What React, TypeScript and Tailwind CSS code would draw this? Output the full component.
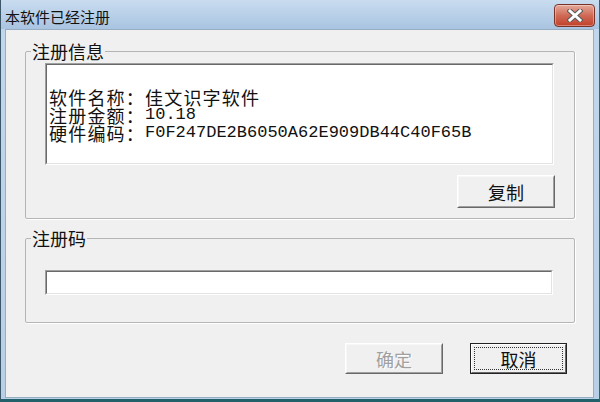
const cjk = "font-['Noto_Sans_CJK_SC','Noto_Sans',sans-serif]";

const Raised = ({ children, w, h, disabled }: { children: string; w: string; h: string; disabled?: boolean }) => (
  <div className={`${w} ${h} border border-t-white border-l-white border-r-[#696969] border-b-[#696969] bg-[#f0f0f0]`}>
    <div className="w-full h-full border border-t-[#f7f7f7] border-l-[#f7f7f7] border-r-[#a0a0a0] border-b-[#a0a0a0] flex items-center justify-center">
      <span
        className={`text-[18px] leading-[18px] ${disabled ? 'text-[#a0a0a0] [text-shadow:1px_1px_0_#ffffff]' : 'text-[#111]'}`}
      >
        {children}
      </span>
    </div>
  </div>
);

const CloseButton = () => (
  <div className="w-[41px] h-[23px] rounded-[4px] border border-[#7a3328] bg-gradient-to-b from-[#e5a99b] via-[#cf6a56] to-[#c23e27] flex items-center justify-center shadow-[inset_0_0_0_1px_rgba(255,255,255,0.35)]">
    <svg width="16" height="13" viewBox="0 0 16 13">
      <path d="M3 2 L13 11 M13 2 L3 11" stroke="#5a5a5a" strokeWidth="5" strokeLinecap="square" />
      <path d="M3 2 L13 11 M13 2 L3 11" stroke="#ffffff" strokeWidth="3" strokeLinecap="square" />
    </svg>
  </div>
);

const Line = ({ label, value, mono }: { label: string; value: string; mono?: boolean }) => (
  <div className="h-[18px] flex items-center whitespace-nowrap">
    <span className="text-[18px] leading-[18px] tracking-[1.2px]">{label}</span>
    {mono ? (
      <span className="font-['Liberation_Mono',monospace] text-[17px] leading-[18px]">{value}</span>
    ) : (
      <span className="text-[18px] leading-[18px] tracking-[1.2px]">{value}</span>
    )}
  </div>
);

export default function App() {
  return (
    <div
      className={`w-[600px] h-[402px] flex flex-col overflow-hidden bg-gradient-to-b from-[#c3d7ec] to-[#b9cfe6] border-l border-l-[#3d576a] border-r border-r-[#2e6672] border-b-[3px] border-b-[#22606a] text-[#111] ${cjk}`}
    >
      <div className="h-[29px] shrink-0 flex items-start justify-between pl-[4px] pr-[4px] bg-gradient-to-b from-[#c9dcf0] to-[#a9c4e1]">
        <span className="text-[15px] leading-[15px] mt-[9px]">本软件已经注册</span>
        <div className="mt-[4px]">
          <CloseButton />
        </div>
      </div>

      <div className="flex-1 ml-[4px] mr-[5px] mb-[1px] bg-[#f0f0f0] border border-[#97adc2] flex flex-col pl-[19px] pr-[18px] pt-[12px]">
        <fieldset className="border border-[#b5b5b5] rounded-[2px] shadow-[1px_1px_0_#ffffff]">
          <legend className="ml-[5px] px-[1px] text-[18px] leading-[18px]">注册信息</legend>
          <div className="ml-[19px] mt-[3px] w-[509px] h-[102px] border border-t-[#a0a0a0] border-l-[#a0a0a0] border-r-white border-b-white">
            <div className="w-full h-full bg-white border border-t-[#696969] border-l-[#696969] border-r-[#e3e3e3] border-b-[#e3e3e3] pl-[2px] pt-[23px]">
              <Line label="软件名称：" value="佳文识字软件" />
              <Line label="注册金额：" value="10.18" mono />
              <Line label="硬件编码：" value="F0F247DE2B6050A62E909DB44C40F65B" mono />
            </div>
          </div>
          <div className="flex justify-end mt-[10px] mr-[19px] pb-[10px]">
            <Raised w="w-[98px]" h="h-[33px]">复制</Raised>
          </div>
        </fieldset>

        <fieldset className="mt-[10px] border border-[#b5b5b5] rounded-[2px] shadow-[1px_1px_0_#ffffff]">
          <legend className="ml-[5px] px-[1px] text-[18px] leading-[18px]">注册码</legend>
          <div className="ml-[19px] mt-[23px] mb-[27px] w-[508px] h-[25px] border border-t-[#a0a0a0] border-l-[#a0a0a0] border-r-white border-b-white">
            <div className="w-full h-full bg-white border border-t-[#696969] border-l-[#696969] border-r-[#e3e3e3] border-b-[#e3e3e3]" />
          </div>
        </fieldset>

        <div className="flex justify-end gap-[27px] mt-[20px] mr-[8px]">
          <Raised w="w-[98px]" h="h-[31px]" disabled>
            确定
          </Raised>
          <div className="w-[97px] h-[31px] border border-[#222] bg-[#f0f0f0]">
            <div className="w-full h-full border border-t-white border-l-white border-r-[#696969] border-b-[#696969] p-[2px]">
              <div className="w-full h-full border border-dotted border-[#333] flex items-center justify-center">
                <span className="text-[18px] leading-[18px]">取消</span>
              </div>
            </div>
          </div>
        </div>
      </div>
    </div>
  );
}
